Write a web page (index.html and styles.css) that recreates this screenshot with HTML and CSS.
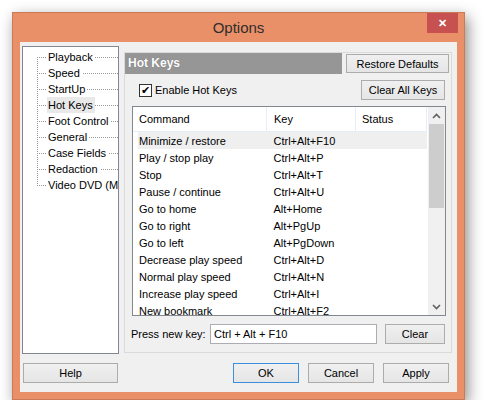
FILE: index.html
```html
<!DOCTYPE html>
<html lang="en">
<head>
  <meta charset="UTF-8" />
  <title>Options</title>
  <link rel="stylesheet" href="styles.css">
</head>
<body>

<div class="janela">
  <div class="barra-titulo">
    <span class="titulo">Options</span>
    <span class="fechar">&#x2715;</span>
  </div>

  <div class="cliente">
    <div class="topo">
      <!-- arvore de categorias -->
      <div class="arvore">
        <ul>
          <li><span>Playback</span></li>
          <li><span>Speed</span></li>
          <li><span>StartUp</span></li>
          <li class="sel"><span>Hot Keys</span></li>
          <li><span>Foot Control</span></li>
          <li><span>General</span></li>
          <li><span>Case Fields</span></li>
          <li><span>Redaction</span></li>
          <li><span>Video DVD (MPEG)</span></li>
        </ul>
      </div>

      <!-- painel Hot Keys -->
      <div class="painel">
        <div class="cabecalho">
          <div class="faixa">Hot Keys</div>
          <button class="btn btn-restore">Restore Defaults</button>
        </div>

        <div class="linha-check">
          <label class="check"><span class="caixa">&#x2714;</span>Enable Hot Keys</label>
          <button class="btn btn-clear-all">Clear All Keys</button>
        </div>

        <div class="lista">
          <div class="tabela-wrap">
            <table>
              <thead>
                <tr><th class="c1">Command</th><th class="c2">Key</th><th class="c3">Status</th></tr>
              </thead>
              <tbody>
                <tr class="ativa"><td>Minimize / restore</td><td>Ctrl+Alt+F10</td><td></td></tr>
                <tr><td>Play / stop play</td><td>Ctrl+Alt+P</td><td></td></tr>
                <tr><td>Stop</td><td>Ctrl+Alt+T</td><td></td></tr>
                <tr><td>Pause / continue</td><td>Ctrl+Alt+U</td><td></td></tr>
                <tr><td>Go to home</td><td>Alt+Home</td><td></td></tr>
                <tr><td>Go to right</td><td>Alt+PgUp</td><td></td></tr>
                <tr><td>Go to left</td><td>Alt+PgDown</td><td></td></tr>
                <tr><td>Decrease play speed</td><td>Ctrl+Alt+D</td><td></td></tr>
                <tr><td>Normal play speed</td><td>Ctrl+Alt+N</td><td></td></tr>
                <tr><td>Increase play speed</td><td>Ctrl+Alt+I</td><td></td></tr>
                <tr><td>New bookmark</td><td>Ctrl+Alt+F2</td><td></td></tr>
              </tbody>
            </table>
          </div>
          <div class="rolagem">
            <div class="seta">
              <svg width="9" height="6" viewBox="0 0 9 6"><path d="M1 5 L4.5 1.5 L8 5" fill="none" stroke="#606060" stroke-width="1.6"/></svg>
            </div>
            <div class="trilho"><div class="polegar"></div></div>
            <div class="seta">
              <svg width="9" height="6" viewBox="0 0 9 6"><path d="M1 1 L4.5 4.5 L8 1" fill="none" stroke="#606060" stroke-width="1.6"/></svg>
            </div>
          </div>
        </div>

        <div class="linha-tecla">
          <span class="rotulo">Press new key:</span>
          <div class="campo">Ctrl + Alt + F10</div>
          <button class="btn btn-clear">Clear</button>
        </div>
      </div>
    </div>

    <div class="rodape">
      <button class="btn btn-help">Help</button>
      <div class="acoes">
        <button class="btn btn-ok">OK</button>
        <button class="btn">Cancel</button>
        <button class="btn">Apply</button>
      </div>
    </div>
  </div>
</div>

</body>
</html>
```

FILE: styles.css
```css
body {
  margin: 0;
  background-color: #fff;
  font-family: 'Liberation Sans', Arial, sans-serif;
  font-size: 11px;
  color: #000;
}

.janela {
  margin: 12px 0 0 12px;
  width: 451px;
  height: 386px;
  background-color: #ea9068;
  border: 1px solid #c97a57;
  box-shadow: 3px 5px 14px rgba(0,0,0,0.45);
  display: flex;
  flex-direction: column;
}

.barra-titulo {
  height: 29px;
  display: flex;
  align-items: center;
  justify-content: center;
  position: relative;
}

.titulo {
  font-size: 15px;
  color: #2e2e2e;
}

.fechar {
  position: absolute;
  top: 0;
  right: 6px;
  width: 31px;
  height: 20px;
  background-color: #c75050;
  color: #fff;
  font-size: 11px;
  font-weight: bold;
  display: flex;
  align-items: center;
  justify-content: center;
}

.cliente {
  margin: 0 7px 7px 7px;
  flex: 1;
  background-color: #f0f0f0;
  display: flex;
  flex-direction: column;
  padding: 4px 5px 0 2px;
}

.topo {
  display: flex;
  gap: 5px;
  height: 308px;
}

/* arvore */
.arvore {
  flex-shrink: 0;
  width: 95px;
  height: 306px;
  background-color: #fff;
  border: 1px solid #828790;
  overflow: hidden;
}

.arvore ul {
  list-style: none;
  margin: 2px 0 0 14px;
  padding: 0;
}

.arvore li {
  height: 16px;
  line-height: 16px;
  padding-left: 10px;
  white-space: nowrap;
  background-image:
    linear-gradient(to bottom, #9a9a9a 50%, transparent 50%),
    linear-gradient(to right, #9a9a9a 50%, transparent 50%);
  background-size: 1px 2px, 2px 1px;
  background-repeat: repeat-y, repeat-x;
  background-position: 0 0, 0 8px;
}

.arvore li:first-child {
  background-image:
    linear-gradient(#fff, #fff),
    linear-gradient(to bottom, #9a9a9a 50%, transparent 50%),
    linear-gradient(to right, #9a9a9a 50%, transparent 50%);
  background-size: 1px 8px, 1px 2px, 2px 1px;
  background-repeat: no-repeat, repeat-y, repeat-x;
  background-position: 0 0, 0 0, 0 8px;
}

.arvore li:last-child {
  background-image:
    linear-gradient(#fff, #fff),
    linear-gradient(to bottom, #9a9a9a 50%, transparent 50%),
    linear-gradient(to right, #9a9a9a 50%, transparent 50%);
  background-size: 1px 7px, 1px 2px, 2px 1px;
  background-repeat: no-repeat, repeat-y, repeat-x;
  background-position: 0 9px, 0 0, 0 8px;
}

.arvore li span {
  display: inline-block;
  background-color: #fff;
  padding: 0 2px 0 1px;
}

.arvore li.sel span {
  background-color: #e9e9e9;
}

/* painel */
.painel {
  flex-shrink: 0;
  margin-top: 6px;
  width: 326px;
  height: 299px;
  border: 1px solid #dadada;
  display: flex;
  flex-direction: column;
}

.cabecalho {
  display: flex;
  align-items: center;
  gap: 4px;
  height: 21px;
  padding-right: 2px;
}

.faixa {
  width: 214px;
  height: 21px;
  line-height: 21px;
  background-color: #969696;
  color: #fff;
  font-weight: bold;
  font-size: 12px;
  padding-left: 3px;
  text-shadow: 0 0 1px rgba(0,0,0,0.3);
}

.btn {
  box-sizing: border-box;
  font-family: inherit;
  font-size: 11px;
  color: #000;
  height: 20px;
  padding: 0;
  border: 1px solid #acacac;
  background: linear-gradient(#f0f0f0, #e5e5e5);
  cursor: pointer;
}

.btn-restore {
  width: 103px;
  height: 19px;
}

.linha-check {
  display: flex;
  align-items: center;
  justify-content: space-between;
  margin: 6px 6px 0 14px;
}

.check {
  display: flex;
  align-items: center;
  gap: 3px;
}

.caixa {
  width: 11px;
  height: 11px;
  border: 1px solid #333;
  background-color: #fff;
  font-size: 11px;
  line-height: 11px;
  text-align: center;
  color: #000;
}

.btn-clear-all {
  width: 84px;
}

/* lista */
.lista {
  margin: 6px 5px 0 7px;
  height: 208px;
  border: 1px solid #828790;
  background-color: #fff;
  display: flex;
}

.tabela-wrap {
  flex: 1;
  overflow: hidden;
}

table {
  border-collapse: collapse;
  table-layout: fixed;
  width: 292px;
}

th {
  height: 24px;
  font-weight: normal;
  text-align: left;
  padding: 0 0 0 6px;
  border-right: 1px solid #e5eef8;
  border-bottom: 1px solid #e5eef8;
}

th.c1 { width: 127px; }
th.c2 { width: 81px; padding-left: 7px; }
th.c3 { width: 64px; }

td {
  height: 17px;
  padding: 0 0 0 6px;
  white-space: nowrap;
  overflow: hidden;
}

td:nth-child(2) {
  padding-left: 7px;
}

tr.ativa td {
  background-color: #efefef;
}

tr.ativa td:first-child {
  background: linear-gradient(to right, #fff 5px, #efefef 5px);
}

.rolagem {
  width: 17px;
  background-color: #f0f0f0;
  display: flex;
  flex-direction: column;
}

.seta {
  height: 17px;
  display: flex;
  align-items: center;
  justify-content: center;
}

.trilho {
  flex: 1;
}

.polegar {
  margin: 0 1px;
  height: 84px;
  background-color: #cdcdcd;
}

/* linha de tecla */
.linha-tecla {
  display: flex;
  align-items: center;
  margin: 8px 6px 0 6px;
}

.rotulo {
  flex-shrink: 0;
  width: 79px;
  white-space: nowrap;
}

.campo {
  box-sizing: border-box;
  flex-shrink: 0;
  width: 167px;
  height: 20px;
  line-height: 18px;
  padding: 0 3px;
  border: 1px solid #abadb3;
  background-color: #fff;
  white-space: nowrap;
}

.btn-clear {
  flex-shrink: 0;
  margin-left: 8px;
  width: 60px;
}

/* rodape */
.rodape {
  display: flex;
  justify-content: space-between;
  margin: 9px 3px 0 1px;
}

.btn-help {
  width: 95px;
}

.acoes {
  display: flex;
  gap: 9px;
}

.acoes .btn {
  width: 66px;
}

.btn-ok {
  border-color: #3c8fdc;
}
```
